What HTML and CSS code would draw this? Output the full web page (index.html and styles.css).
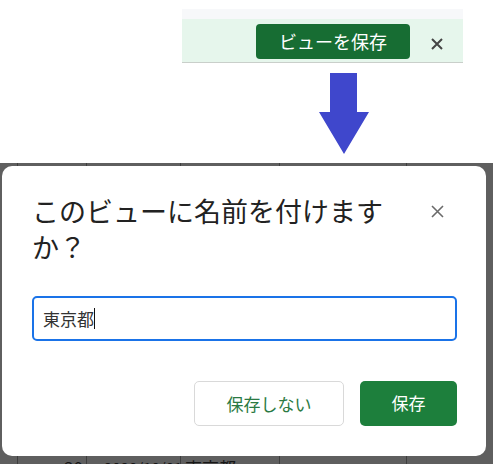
FILE: index.html
```html
<!DOCTYPE html>
<html lang="ja">
<head>
<meta charset="utf-8">
<link rel="stylesheet" href="styles.css">
</head>
<body>
<div class="top">
  <div class="banner">
    <div class="banner-strip"></div>
    <div class="banner-bar">
      <button class="save-view">ビューを保存</button>
      <span class="banner-close">
        <svg width="12" height="12" viewBox="0 0 12 12"><path d="M1 1L11 11M11 1L1 11" stroke="#444" stroke-width="2" fill="none"/></svg>
      </span>
    </div>
  </div>
  <svg class="arrow" width="50" height="81" viewBox="0 0 50 81">
    <path d="M11 0H38V39H50L25 81L0 39H11Z" fill="#3f47cc"/>
  </svg>
</div>
<div class="backdrop">
  <div class="table-row">
    <span class="cell c1">30</span>
    <span class="cell c2">2020/10/01</span>
    <span class="cell c3">東京都</span>
  </div>
  <div class="dialog">
    <div class="dialog-head">
      <h2 class="dialog-title">このビューに名前を付けますか？</h2>
      <span class="dialog-close">
        <svg width="13" height="13" viewBox="0 0 13 13"><path d="M1 1L12 12M12 1L1 12" stroke="#6a6a6a" stroke-width="1.6" fill="none"/></svg>
      </span>
    </div>
    <div class="name-input"><span class="value">東京都</span><span class="caret"></span></div>
    <div class="actions">
      <button class="btn btn-secondary">保存しない</button>
      <button class="btn btn-primary">保存</button>
    </div>
  </div>
</div>
</body>
</html>
```
FILE: styles.css
```css
* { box-sizing: border-box; }
html, body { margin: 0; padding: 0; }
body {
  width: 493px;
  height: 464px;
  overflow: hidden;
  background: #fff;
  font-family: "Noto Sans CJK JP", "Noto Sans", sans-serif;
}
.top { height: 163px; padding-top: 9px; }
.banner { margin-left: 182px; width: 281px; }
.banner-strip { height: 10px; background: #f7f8fa; }
.banner-bar {
  height: 44px;
  background: #e6f6ec;
  border-bottom: 1px solid #c9cfca;
  display: flex;
  align-items: flex-start;
  padding: 5px 0 0 74px;
}
.save-view {
  width: 154px;
  height: 35px;
  border: 0;
  border-radius: 4px;
  background: #176d33;
  color: #fff;
  font-family: inherit;
  font-size: 18px;
  line-height: 35px;
  padding: 0;
}
.banner-close { display: block; margin: 14px 0 0 21px; line-height: 0; }
.arrow { display: block; margin: 10px 0 0 319px; }

.backdrop {
  position: relative;
  height: 301px;
  background-color: #5f5f5f;
  background-image:
    linear-gradient(#3e3e3e, #3e3e3e),
    linear-gradient(#3e3e3e, #3e3e3e),
    linear-gradient(#3e3e3e, #3e3e3e),
    linear-gradient(#3e3e3e, #3e3e3e),
    linear-gradient(#3e3e3e, #3e3e3e);
  background-size: 1px 100%;
  background-repeat: no-repeat;
  background-position: 17px 0, 86px 0, 180px 0, 279px 0, 406px 0;
  padding-top: 295px;
}
.table-row { display: flex; height: 20px; color: #161616; font-size: 17px; line-height: 20px; }
.cell { display: block; }
.c1 { margin-left: 64px; width: 40px; }
.c2 { width: 81px; font-size: 15px; }

.dialog {
  position: absolute;
  left: 2px;
  top: 3px;
  width: 484px;
  height: 290px;
  background: #fff;
  border-radius: 10px;
  padding: 27px 29px 30px 30px;
  display: flex;
  flex-direction: column;
}
.dialog-head { display: flex; align-items: flex-start; gap: 10px; }
.dialog-title {
  margin: 0;
  flex: 0 0 375px;
  font-size: 27px;
  font-weight: 400;
  line-height: 36px;
  color: #222;
}
.dialog-close {
  width: 40px;
  height: 36px;
  display: flex;
  align-items: center;
  justify-content: center;
  margin-left: auto;
}
.name-input {
  margin-top: 31px;
  height: 45px;
  border: 2px solid #1a73e8;
  border-radius: 5px;
  padding-left: 9px;
  display: flex;
  align-items: center;
  font-size: 17px;
  color: #333;
}
.caret { display: block; width: 1px; height: 21px; background: #111; }
.actions {
  margin-top: 40px;
  display: flex;
  justify-content: flex-end;
  gap: 16px;
}
.btn {
  height: 45px;
  border-radius: 5px;
  font-family: inherit;
  font-size: 17px;
  line-height: 43px;
  padding: 0 0 2px;
}
.btn-secondary {
  width: 150px;
  background: #fff;
  border: 1px solid #d9d9d9;
  color: #2b7a43;
}
.btn-primary {
  width: 97px;
  background: #1d7f3c;
  border: 0;
  color: #fff;
}
```
